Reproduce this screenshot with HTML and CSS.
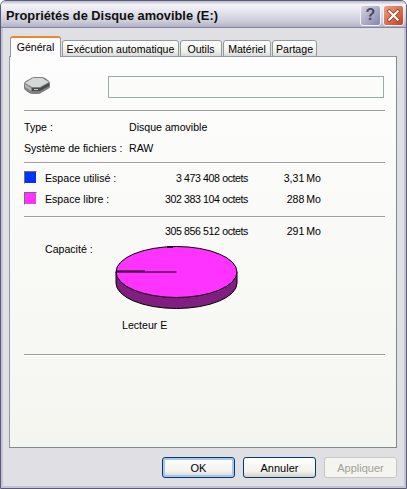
FILE: index.html
```html
<!DOCTYPE html>
<html lang="fr">
<head>
    <meta charset="UTF-8">
    <title>Propriétés de Disque amovible (E:)</title>
    <link rel="stylesheet" href="styles.css">
</head>
<body>
    <div class="window">
        <div class="title-bar">
            <div class="title-text">Propriétés de Disque amovible (E:)</div>
            <div class="title-btn help-btn">?</div>
            <div class="title-btn close-btn">
                <svg width="15" height="15" viewBox="0 0 15 15">
                    <path d="M2 2 L13 13 M13 2 L2 13" stroke="#8e2a14" stroke-width="3.6" fill="none"/>
                    <path d="M2.5 2.5 L12.5 12.5 M12.5 2.5 L2.5 12.5" stroke="#fff" stroke-width="2.4" fill="none"/>
                </svg>
            </div>
        </div>
        <div class="client">
            <div class="tabs">
                <div class="tab active">Général</div>
                <div class="tab tab-auto">Exécution automatique</div>
                <div class="tab tab-tools">Outils</div>
                <div class="tab tab-hw">Matériel</div>
                <div class="tab tab-share">Partage</div>
            </div>
            <div class="panel">
                <div class="name-row">
                    <svg class="drive-icon" width="28" height="19" viewBox="0 0 28 19">
                        <path d="M1 8 Q1 6 3 5 L9 1.5 Q10 1 12 1 H19 Q21 1 23 2.5 L26 5 Q27 6 27 8 V11 Q27 12 25 13 L18 17 Q17 18 15 18 H10 Q8 18 6 17 L2 14 Q1 13 1 12 Z" fill="#808080"/>
                        <path d="M2 7 L10 2 H19 L26 6 L17 11 H9 Z" fill="#d6d8d8"/>
                        <path d="M9 12 H17 L26 7 V10 L17 15 H9 Z" fill="#4a4a4a"/>
                        <path d="M2 8 L8 12 V15 L2 11 Z" fill="#b4b4b4"/>
                        <path d="M11 13 H15 V14 H11 Z" fill="#c8c8c8"/>
                    </svg>
                    <div class="name-input"></div>
                </div>
                <div class="sep sep-name"></div>
                <div class="info-row"><span class="info-label">Type :</span><span>Disque amovible</span></div>
                <div class="info-row"><span class="info-label">Système de fichiers :</span><span>RAW</span></div>
                <div class="sep sep-info"></div>
                <div class="space-row">
                    <span class="swatch swatch-used"></span>
                    <span class="space-label">Espace utilisé :</span>
                    <span class="bytes">3 473 408 octets</span>
                    <span class="size">3,31 Mo</span>
                </div>
                <div class="space-row">
                    <span class="swatch swatch-free"></span>
                    <span class="space-label">Espace libre :</span>
                    <span class="bytes">302 383 104 octets</span>
                    <span class="size">288 Mo</span>
                </div>
                <div class="sep sep-space"></div>
                <div class="space-row total-row">
                    <span class="swatch-gap"></span>
                    <span class="space-label"></span>
                    <span class="bytes">305 856 512 octets</span>
                    <span class="size">291 Mo</span>
                </div>
                <div class="capacity">
                    <span class="capacity-label">Capacité :</span>
                    <svg class="pie" width="124" height="64" viewBox="0 0 124 64">
                        <path d="M1 26 V37 A60.5 25.5 0 0 0 122 37 V26 Z" fill="#7f1f7f" stroke="#000"/>
                        <ellipse cx="61.5" cy="26" rx="60.5" ry="25.5" fill="#ff33ff" stroke="#000"/>
                        <path d="M1 26 H61.5" stroke="#000"/>
                        <path d="M1 25 H30" stroke="#000"/>
                        <path d="M52 1 H58" stroke="#000" stroke-width="1.5"/>
                    </svg>
                </div>
                <div class="drive-label">Lecteur E</div>
                <div class="sep sep-drive"></div>
            </div>
            <div class="actions">
                <button class="btn btn-default">OK</button>
                <button class="btn">Annuler</button>
                <button class="btn btn-disabled">Appliquer</button>
            </div>
        </div>
    </div>
</body>
</html>
```

FILE: styles.css
```css
html, body {
    margin: 0;
    padding: 0;
}
body {
    width: 407px;
    height: 489px;
    overflow: hidden;
    background: #fff;
    font-family: "Liberation Sans", Arial, sans-serif;
    font-size: 10.6px;
    color: #000;
}
.window {
    width: 407px;
    height: 489px;
    box-sizing: border-box;
    display: flex;
    flex-direction: column;
    background: #e0dfe3;
    border: 1px solid #5a5a78;
    border-radius: 6px 6px 0 0;
    overflow: hidden;
}
.title-bar {
    flex: none;
    display: flex;
    align-items: center;
    padding: 2px 2px 0 5px;
    height: 24px;
    background: linear-gradient(#b8b8ca 0%, #f4f4f8 14%, #e2e2ea 45%, #cfcfdc 75%, #b2b2c6 100%);
    border-bottom: 1px solid #8484a4;
}
.title-text {
    flex: 1;
    font-size: 12.8px;
    font-weight: bold;
    color: #101010;
}
.title-btn {
    width: 21px;
    height: 21px;
    margin-left: 2px;
    box-sizing: border-box;
    border: 1px solid #f4f4f8;
    border-radius: 3px;
    display: flex;
    align-items: center;
    justify-content: center;
}
.help-btn {
    background: linear-gradient(135deg, #d6d6e6, #8484ac);
    color: #4a4a60;
    font-size: 16px;
    font-weight: bold;
}
.close-btn {
    background: linear-gradient(135deg, #f0a08a, #c8401c);
}
.client {
    flex: 1;
    display: flex;
    flex-direction: column;
    padding: 9px 7px 0 6px;
    border-left: 2px solid #c4c4d6;
    border-right: 2px solid #c4c4d6;
    border-bottom: 2px solid #c4c4d6;
    box-sizing: border-box;
}
.tabs {
    height: 20px;
    flex: none;
    display: flex;
    align-items: flex-end;
    position: relative;
    z-index: 1;
    margin-bottom: -1px;
    padding-left: 1px;
}
.tab {
    box-sizing: border-box;
    height: 17px;
    margin-right: 1px;
    text-align: center;
    line-height: 16px;
    background: linear-gradient(#fff, #f0f0ea 70%, #d8d8dc);
    border: 1px solid #919b9c;
    border-radius: 3px 3px 0 0;
}
.tab-auto { width: 117px; }
.tab-tools { width: 42px; }
.tab-hw { width: 48px; }
.tab-share { width: 45px; }
.tab.active {
    height: 21px;
    width: 51px;
    line-height: 19px;
    background: #fcfcfe;
    border-top: 2px solid #e68b2c;
    border-bottom: none;
}
.panel {
    flex: none;
    height: 392px;
    box-sizing: border-box;
    padding: 19px 11px 0 14px;
    background: linear-gradient(#fdfdfd, #f5f5f0);
    border: 1px solid #919b9c;
    border-right-color: #808a8b;
    border-bottom-color: #808a8b;
}
.name-row {
    display: flex;
    align-items: center;
    height: 22px;
}
.drive-icon {
    flex: none;
    margin-top: -3px;
    margin-right: 57px;
    margin-left: -1px;
}
.name-input {
    width: 276px;
    height: 22px;
    box-sizing: border-box;
    border: 1px solid #9caaaa;
    background: #fbfbf9;
}
.sep {
    height: 1px;
    background: #9e9e9e;
    border-bottom: 1px solid #fff;
}
.sep-name { margin: 12px 0 4px; }
.sep-info { margin: 4px 0 3px; }
.sep-space { margin: 7px 0 2px; }
.sep-drive { margin-top: 21px; }
.info-row {
    height: 21px;
    display: flex;
    align-items: center;
}
.info-label {
    width: 105px;
    flex: none;
}
.space-row {
    height: 21px;
    display: flex;
    align-items: center;
}
.swatch {
    width: 13px;
    height: 13px;
    flex: none;
    box-sizing: border-box;
    border: 1px solid #707070;
    border-right-color: #fff;
    border-bottom-color: #fff;
}
.swatch-used { background: #0033ff; }
.swatch-free { background: #ff33ff; }
.swatch-gap {
    width: 13px;
    flex: none;
}
.space-label {
    width: 84px;
    margin-left: 8px;
    flex: none;
}
.bytes {
    width: 119px;
    flex: none;
    text-align: right;
    letter-spacing: -0.4px;
}
.size {
    width: 73px;
    flex: none;
    text-align: right;
    word-spacing: -1px;
}
.capacity {
    display: flex;
    align-items: flex-start;
    height: 72px;
}
.capacity-label {
    width: 70px;
    margin-left: 21px;
    margin-top: 2px;
    flex: none;
}
.pie {
    flex: none;
    margin-top: 5px;
}
.drive-label {
    height: 14px;
    margin-left: 98px;
    margin-top: 6px;
}
.actions {
    display: flex;
    justify-content: flex-end;
    gap: 8px;
    margin-top: 9px;
}
.btn {
    width: 73px;
    height: 21px;
    padding: 0;
    font-family: inherit;
    font-size: 11px;
    color: #000;
    background: linear-gradient(#fff, #f2f2ee 70%, #d6d0c5);
    border: 1px solid #003c74;
    border-radius: 3px;
}
.btn-default {
    box-shadow: inset 0 0 0 2px #a9c4ee;
}
.btn-disabled {
    background: #f4f4f0;
    border-color: #c9c7ba;
    color: #a1a192;
}
```
